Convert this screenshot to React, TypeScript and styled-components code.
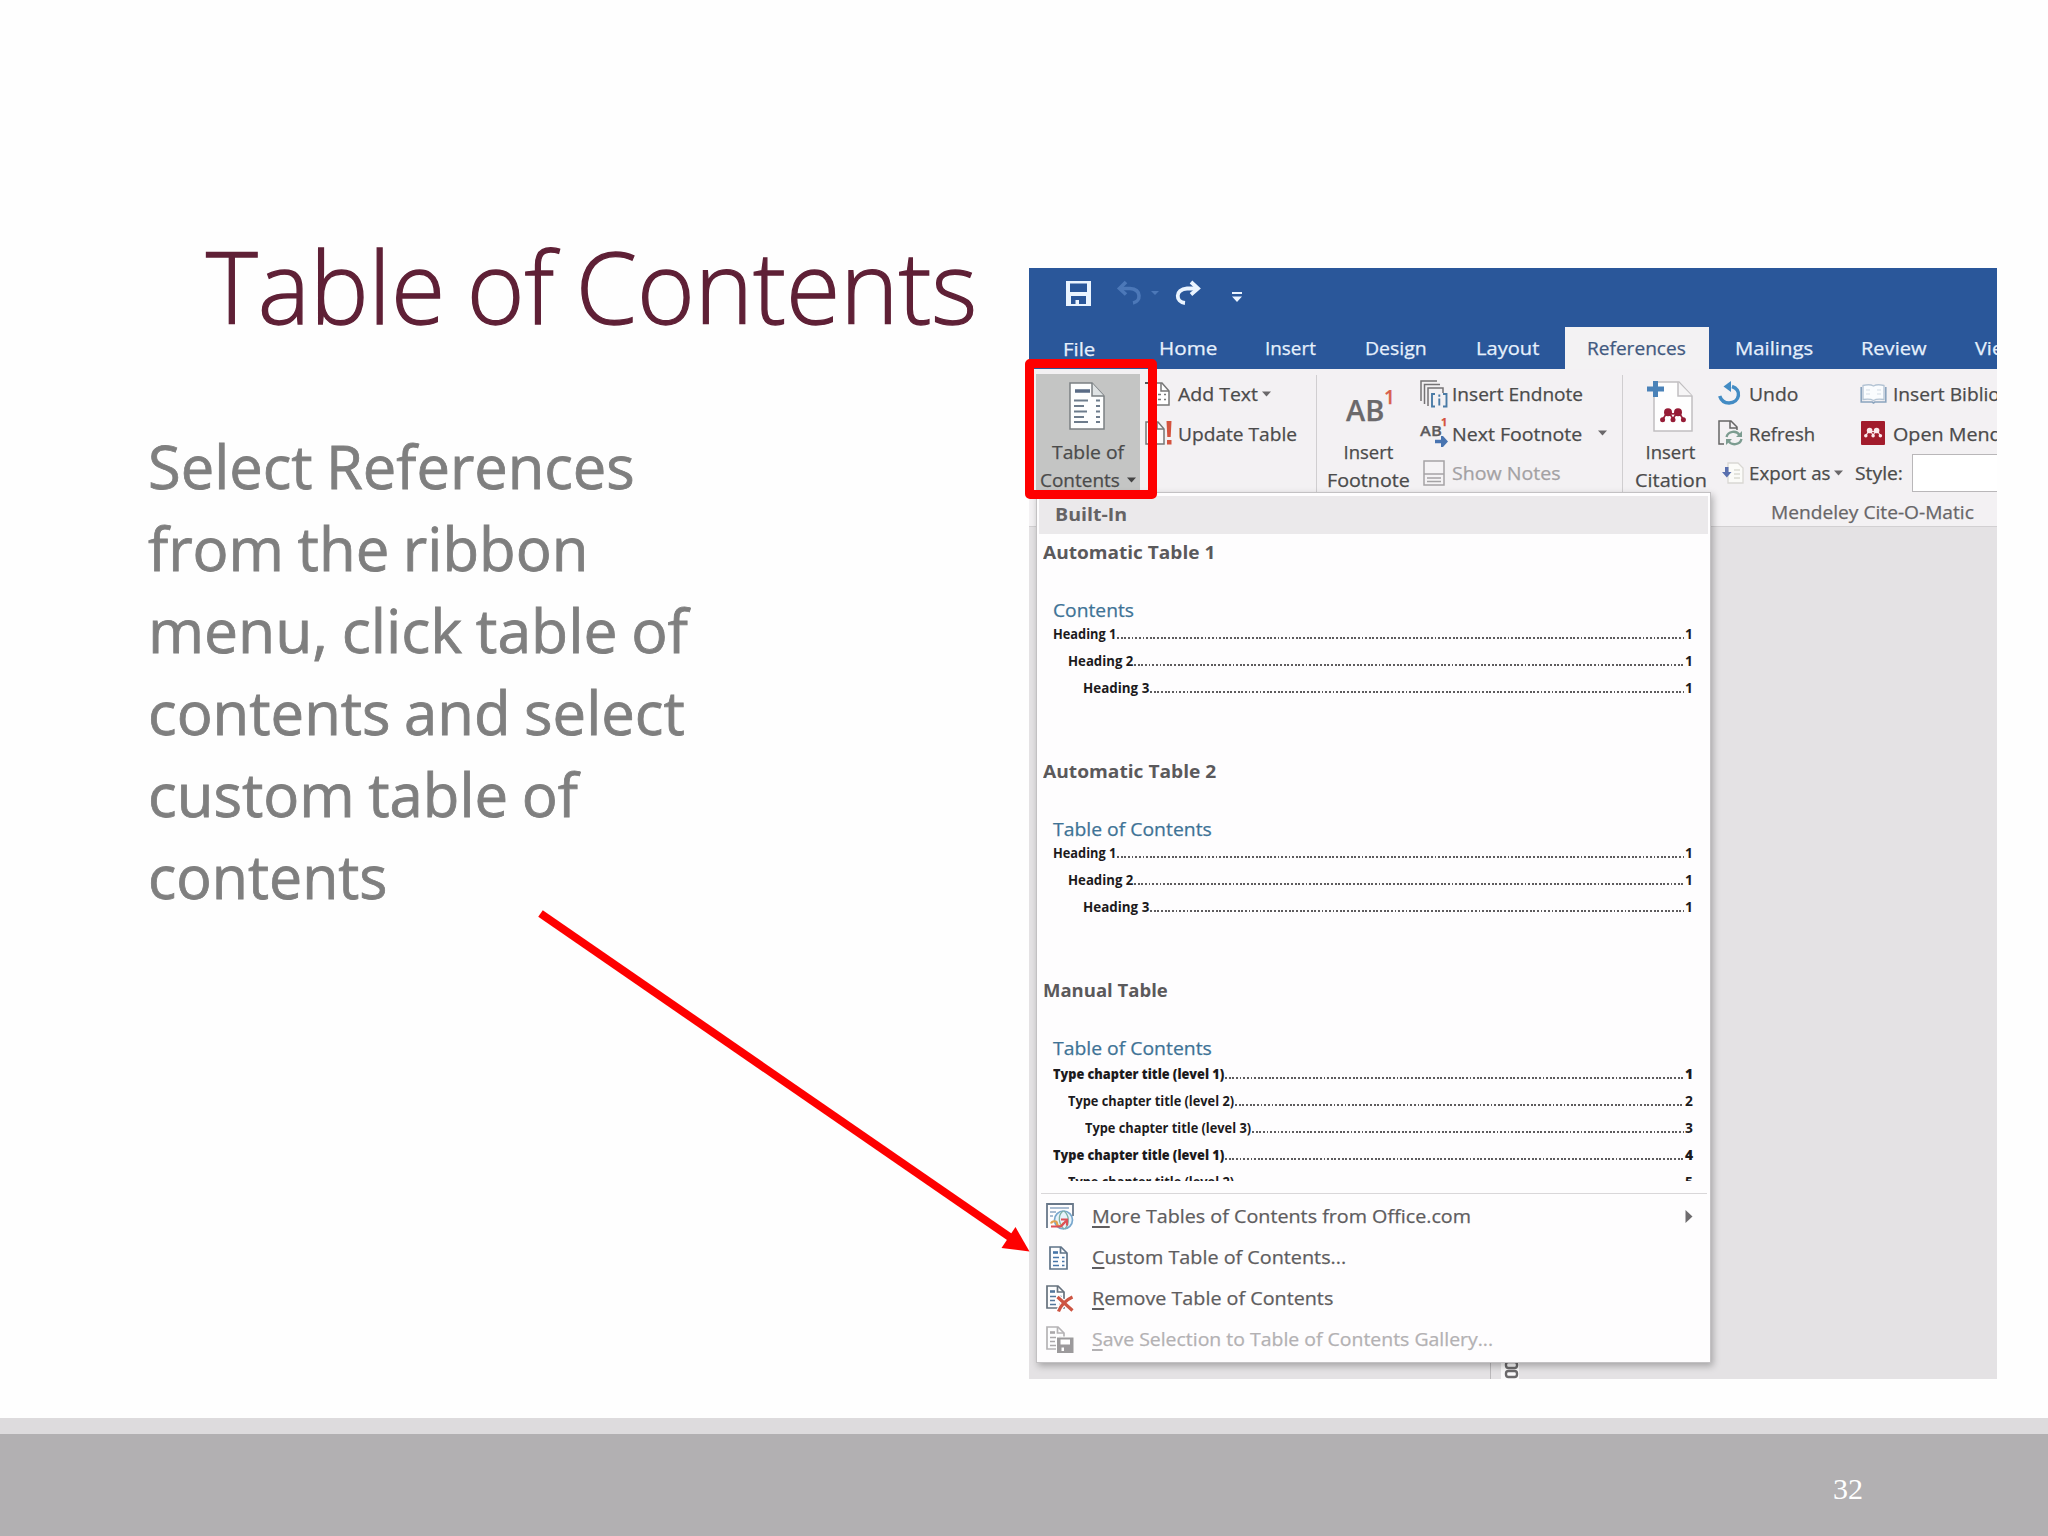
import React, { useLayoutEffect, useRef, useState } from "react";
import styled, { createGlobalStyle, css } from "styled-components";

const UI = `"Open Sans", "Noto Sans", sans-serif`;

const Global = createGlobalStyle`
  *, *::before, *::after { box-sizing: border-box; }
  html, body { margin: 0; padding: 0; background: #fefefe; }
  svg { display: block; flex: none; overflow: visible; }
`;

/* ---------- text that is condensed or widened to a set measure ---------- */

const Measure = styled.span<{ $w: number }>`
  display: block;
  flex: none;
  width: ${(p) => p.$w}px;
  white-space: nowrap;
`;
const Ink = styled.span`
  display: inline-block;
  transform-origin: 0 50%;
  white-space: nowrap;
`;

function Fit({ w, children }: { w: number; children: React.ReactNode }) {
  const ref = useRef<HTMLSpanElement>(null);
  const [scale, setScale] = useState(1);
  useLayoutEffect(() => {
    const natural = ref.current?.offsetWidth ?? 0;
    if (natural > 0) setScale(w / natural);
  }, [w]);
  return (
    <Measure $w={w}>
      <Ink ref={ref} style={{ transform: `scaleX(${scale})` }}>
        {children}
      </Ink>
    </Measure>
  );
}

/* ---------- slide ---------- */

const Slide = styled.main`
  position: relative;
  width: 2048px;
  height: 1536px;
  overflow: hidden;
  display: flex;
  flex-direction: column;
  background: #fefefe;
`;
const Body = styled.section`
  display: flex;
  height: 1418px;
`;
const Copy = styled.div`
  width: 1029px;
  flex: none;
  padding: 225px 0 0 148px;
`;
const Title = styled.h1`
  margin: 0 0 80px;
  padding-left: 58px;
  font: 300 100px/120px ${UI};
  word-spacing: -4px;
  color: #5f2036;
  -webkit-text-stroke: 1.3px #5f2036;
`;
const Para = styled.p`
  margin: 0;
  font: 400 60px/82px ${UI};
  word-spacing: -2px;
  color: #7f7f7f;
  -webkit-text-stroke: 0.8px #7f7f7f;
`;
const Stripe = styled.div`
  height: 16px;
  background: #dddbdd;
`;
const Footer = styled.footer`
  flex: 1;
  padding: 38px 0 0 1833px;
  background: #b2b0b2;
  color: #fff;
  font: 30px/34px "Liberation Serif", serif;
`;
const Pointer = styled.svg`
  position: absolute;
  left: 530px;
  top: 900px;
`;

/* ---------- word window ---------- */

const Window = styled.div`
  position: relative;
  margin-top: 268px;
  width: 968px;
  height: 1111px;
  overflow: hidden;
  display: flex;
  flex-direction: column;
  background: #e4e2e4;
  font-family: ${UI};
  -webkit-text-stroke: 0.25px currentColor;
`;
const TitleBar = styled.div`
  height: 59px;
  flex: none;
  display: flex;
  align-items: flex-start;
  padding: 13px 0 0 37px;
  background: #2a579a;
`;
const Gap = styled.span<{ $w: number }>`
  flex: none;
  width: ${(p) => p.$w}px;
`;
const Tabs = styled.nav`
  height: 42px;
  flex: none;
  display: flex;
  background: #2a579a;
`;
const Tab = styled.span<{ $lead: number; $box: number; $on?: boolean; $drop?: number }>`
  flex: none;
  width: ${(p) => p.$box}px;
  padding: ${(p) => p.$drop ?? 0}px 0 0 ${(p) => p.$lead}px;
  font-size: 18.5px;
  line-height: 42px;
  color: ${(p) => (p.$on ? "#41597f" : "#e6f0fc")};
  background: ${(p) => (p.$on ? "#f3f2f3" : "transparent")};
`;
const Ribbon = styled.div`
  height: 158px;
  flex: none;
  display: flex;
  padding-left: 7px;
  background: #f3f1f3;
  border-bottom: 1px solid #d2d0d2;
  color: #4b4b4b;
  font-size: 18.5px;
`;
const Big = styled.div<{ $w: number; $on?: boolean }>`
  flex: none;
  width: ${(p) => p.$w}px;
  height: 118px;
  margin-top: 5px;
  padding-top: 6px;
  display: flex;
  flex-direction: column;
  align-items: center;
  line-height: 28px;
  ${(p) => p.$on && css`background: #c4c5c4;`}
`;
const Art = styled.div<{ $left?: number; $right?: number; $drop?: number }>`
  height: 58px;
  flex: none;
  padding-left: ${(p) => p.$left ?? 0}px;
  padding-right: ${(p) => p.$right ?? 0}px;
  padding-top: ${(p) => p.$drop ?? 2}px;
`;
const Line = styled.div`
  display: flex;
  align-items: center;
  gap: 7px;
`;
const Column = styled.div<{ $w: number }>`
  flex: none;
  width: ${(p) => p.$w}px;
  padding-top: 5px;
`;
const Row = styled.div<{ $off?: boolean }>`
  height: 39.5px;
  display: flex;
  align-items: center;
  line-height: 39.5px;
  white-space: nowrap;
  color: ${(p) => (p.$off ? "#a3a1a3" : "#4b4b4b")};
`;
const Slot = styled.span<{ $w: number; $lead?: number }>`
  flex: none;
  width: ${(p) => p.$w}px;
  padding-left: ${(p) => p.$lead ?? 0}px;
`;
const Rule = styled.i`
  flex: none;
  width: 1px;
  height: 118px;
  margin-top: 6px;
  background: #d0ced0;
`;
const StyleBox = styled.span`
  flex: none;
  width: 100px;
  height: 38px;
  margin-left: 9px;
  background: #fff;
  border: 1px solid #b9b7b9;
`;
const GroupName = styled.div`
  padding: 2px 0 0 53px;
  line-height: 32px;
  color: #686668;
`;
const Cluster = styled.div`
  flex: none;
`;
const ClusterRow = styled.div`
  display: flex;
  height: 124.5px;
`;

/* ---------- drop-down gallery ---------- */

const Menu = styled.div`
  position: absolute;
  left: 7px;
  top: 224px;
  width: 675px;
  height: 871px;
  display: flex;
  flex-direction: column;
  background: #fefdfe;
  border: 1px solid #c3c1c3;
  box-shadow: 2px 3px 7px rgba(0, 0, 0, 0.28);
`;
const MenuHead = styled.div`
  flex: none;
  height: 38px;
  margin: 3px 2px 0 2px;
  padding-left: 16px;
  background: #ebe9eb;
  color: #656365;
  font: 700 18.5px/35px ${UI};
  -webkit-text-stroke: 0;
`;
const Gallery = styled.div`
  height: 647px;
  flex: none;
  overflow: hidden;
`;
const Entry = styled.section`
  height: 219.2px;
  padding: 3px 17px 0 6px;
`;
const EntryName = styled.div`
  font: 700 18.5px/30px ${UI};
  color: #5b595b;
  -webkit-text-stroke: 0;
`;
const EntryTitle = styled.div`
  margin: 28px 0 0 10px;
  font: 400 19px/30px ${UI};
  color: #3f7396;
`;
const Toc = styled.div<{ $pull: number }>`
  margin-top: ${(p) => -p.$pull}px;
  padding: 0 0 0 10px;
  -webkit-text-stroke: 0;
`;
const TocRow = styled.div<{ $in: number; $strong?: boolean }>`
  height: 27.1px;
  display: flex;
  padding-left: ${(p) => p.$in}px;
  font: ${(p) => (p.$strong ? 800 : 700)} 13.8px/27px ${UI};
  color: #1c1a1c;
`;
const Dots = styled.i`
  flex: 1;
  height: 2px;
  margin: 17px 1px 0 1px;
  background: repeating-linear-gradient(90deg, #5e5c5e 0 1.9px, transparent 1.9px 3.65px);
`;
const Actions = styled.div`
  flex: none;
  margin: 12px 3px 0 4px;
  padding-top: 2px;
  border-top: 1px solid #d9d7d9;
`;
const Action = styled.div<{ $off?: boolean }>`
  height: 41.1px;
  display: flex;
  align-items: center;
  font-size: 19px;
  line-height: 41px;
  color: ${(p) => (p.$off ? "#b3b1b3" : "#5f5d5f")};
`;
const Key = styled.span`
  text-decoration: underline;
  text-decoration-thickness: 1.5px;
  text-underline-offset: 3px;
`;
const Frame = styled.div`
  position: absolute;
  left: 1025px;
  top: 358.5px;
  width: 132px;
  height: 140px;
  border: 9px solid #fe0000;
  border-radius: 5px;
`;
const RulerMark = styled.svg`
  position: absolute;
  left: 462px;
  top: 1095px;
`;

/* ---------- drawings ---------- */

const Caret = ({ color = "#6a686a" }: { color?: string }) => (
  <svg width="9" height="6" viewBox="0 0 9 6"><path d="M0 .5h9L4.500 5.500z" fill={color} /></svg>
);
const SaveIcon = () => (
  <svg width="25" height="25" viewBox="0 0 25 25">
    <path fillRule="evenodd" fill="#eaf4ff" d="M0 0h25v25H0zM4 2.500v8.500h17V2.500zM5 15v8h4.500v-4H13v4h7v-8z" />
  </svg>
);
const TurnBack = () => (
  <svg width="25" height="24" viewBox="0 0 25 24">
    <g fill="none" stroke="#4c78b8" strokeWidth="3.600"><path d="M9 1 2.500 7.500 9 13.500" /><path d="M3 7.500h10c12 1 11 13 3 14.500" /></g>
  </svg>
);
const TurnForward = () => (
  <svg width="26" height="24" viewBox="0 0 26 24">
    <g fill="none" stroke="#eaf4ff" strokeWidth="3.800"><path d="m16 1 7 6.500-7 6" /><path d="M22 7.500H12C-.5 8.500.5 21 10 22" /></g>
  </svg>
);
const MoreIcon = () => (
  <svg width="10" height="22" viewBox="0 0 10 22"><path d="M0 11h10v2H0zM0 15.500h10l-5 5.500z" fill="#eaf4ff" /></svg>
);
const BigDoc = () => (
  <svg width="36" height="48" viewBox="0 0 36 48">
    <path d="M1 1h22l12 13v33H1z" fill="#fdfefe" stroke="#7b8083" strokeWidth="1.500" />
    <path d="M23 1v13h12" fill="#dfe3e4" stroke="#7b8083" strokeWidth="1.500" />
    <path d="M6 9h15" stroke="#596b85" strokeWidth="3.500" />
    <path d="M5 18.500h14M5 24h10M5 29.500h13M5 35h10M5 40h14" stroke="#6d7c8c" strokeWidth="1.800" />
    <path d="M27 18.500h4M27 24h4M27 29.500h4M27 35h4M27 40h4" stroke="#6d7c8c" strokeWidth="1.800" />
  </svg>
);
const AddTextIcon = () => (
  <svg width="25" height="26" viewBox="0 0 25 26">
    <path d="M0 2h6" stroke="#555" strokeWidth="2" />
    <path d="M5 2h12l7 8v14H5z" fill="#fff" stroke="#777" strokeWidth="1.500" />
    <path d="M16 2v8h8M13 13.500h3m3 0h2M13 18.500h3m3 0h2" fill="none" stroke="#777" strokeWidth="1.500" />
  </svg>
);
const UpdateIcon = () => (
  <svg width="28" height="26" viewBox="0 0 28 26">
    <path d="M1 2h12l6 7v15H1z" fill="#fbfafb" stroke="#777" strokeWidth="1.500" />
    <path d="M12 2v7h7" fill="none" stroke="#777" strokeWidth="1.500" />
    <path d="M21.500 1h5l-.8 16h-3.400zM22 20h4.500v4.500H22z" fill="#d4533f" />
  </svg>
);
const AbMark = styled.span`
  display: flex;
  align-items: flex-start;
  height: 45px;
  font: 600 29px/43px ${UI};
  color: #6b696b;
`;
const AbSup = styled.span`
  margin-left: 0;
  font: 600 19px/18px ${UI};
  color: #d8604b;
`;
const EndnoteIcon = () => (
  <svg width="28" height="28" viewBox="0 0 28 28">
    <g fill="none" stroke="#757375" strokeWidth="1.500">
      <path d="M1 21V1h16M4.500 24V4.500H20M8 26V8h15v5" />
    </g>
    <g fill="none" stroke="#4a7ba6" strokeWidth="1.900"><path d="M15 14h-3v12.500h3M23 14h3.500v12.500H23M19.300 18.500v7M19.300 14.500v2.200" /></g>
  </svg>
);
const NextBox = styled.span`
  position: relative;
  display: block;
  height: 28px;
  font: 600 15px/22px ${UI};
  color: #5d5b5d;
`;
const NextSup = styled.span`
  position: absolute;
  left: 21px;
  top: -4px;
  font: 700 11px/14px ${UI};
  color: #d4533f;
`;
const NextArrow = styled.svg`
  position: absolute;
  left: 15px;
  top: 17px;
`;
const NotesIcon = () => (
  <svg width="22" height="26" viewBox="0 0 22 26">
    <path d="M1 1h20v24H1zM1 14h20" fill="#f5f3f5" stroke="#a5a3a5" strokeWidth="1.500" />
    <path d="M4 18h14M4 21.500h14" stroke="#a5a3a5" strokeWidth="1.400" />
  </svg>
);
const Mendeley = ({ fill }: { fill: string }) => (
  <g fill={fill}>
    <circle cx="8" cy="4.300" r="4" /><circle cx="18" cy="4.300" r="4" />
    <circle cx="2.600" cy="11.800" r="2.500" /><circle cx="13" cy="11.800" r="2.500" /><circle cx="23.400" cy="11.800" r="2.500" />
    <path d="M3 11 7 4.500l6 1.500 6-1.500 4 6.500M10 6l3 5 3-5" fill="none" stroke={fill} strokeWidth="1.600" />
  </g>
);
const CitationIcon = () => (
  <svg width="46" height="53" viewBox="0 0 46 53">
    <path d="M7 2h25l13 14v35H7z" fill="#fefefe" stroke="#c1bfc1" strokeWidth="1.500" />
    <path d="M31 2v14h14" fill="#f6f5f6" stroke="#c1bfc1" strokeWidth="1.500" />
    <path d="M6 1h5v5.500h6v5h-6V17H6v-5.500H0v-5h6z" fill="#4a82b8" />
    <g transform="translate(13 28)"><Mendeley fill="#951c36" /></g>
  </svg>
);
const UndoIcon = () => (
  <svg width="23" height="25" viewBox="0 0 23 25">
    <path d="M14 5.500c10 3 8 16-3 16.500-5 0-8-3-9.300-7" fill="none" stroke="#438cc4" strokeWidth="3.500" />
    <path d="M13 0v11L5.500 5.500z" fill="#438cc4" />
  </svg>
);
const RefreshIcon = () => (
  <svg width="25" height="27" viewBox="0 0 25 27">
    <path d="M6 24H1V1h12l6 6v3M12 1v7h7" fill="none" stroke="#666" strokeWidth="1.500" />
    <g fill="none" stroke="#7c9c90" strokeWidth="2.400"><path d="M8.500 17c1.500-6 10-7 13-2M23.500 19c-1.500 6-10 7-13 2" /></g>
    <path d="M24 11v6h-6zM8 25v-6h6z" fill="#7c9c90" />
  </svg>
);
const ExportIcon = () => (
  <svg width="22" height="22" viewBox="0 0 22 22">
    <path d="M6 1h10l5 5v15H6z" fill="#fbfbf8" stroke="#d9d7d3" strokeWidth="1.300" />
    <path d="M12 8h6M12 12h6M12 16h6" stroke="#dcdcd2" strokeWidth="1.300" />
    <path d="M3 5h3.500v5H9.500l-4.700 5.500L0 10h3z" fill="#596fae" />
  </svg>
);
const BookIcon = () => (
  <svg width="27" height="20" viewBox="0 0 27 20">
    <path d="M3 1.500c4-1 8-1 10.500.5C16 .5 20 .5 24 1.500v14c-4-.6-8-.6-10.500 1-2.500-1.600-6.500-1.600-10.500-1z" fill="#fafcfe" stroke="#b4c4d4" strokeWidth="1.300" />
    <path d="M1.200 3v15h11l1.300 1 1.300-1h11V3" fill="none" stroke="#8ba4be" strokeWidth="1.600" />
    <path d="M6 6h4M6 10h4M17 6h4M17 10h4" stroke="#d3dce5" />
  </svg>
);
const OpenIcon = () => (
  <svg width="24" height="24" viewBox="0 0 24 24">
    <rect width="24" height="24" rx="1" fill="#a21c2c" />
    <g transform="translate(3 6.500) scale(.7)"><Mendeley fill="#fbe9eb" /></g>
  </svg>
);
const SmallDocShape = ({ c, a }: { c: string; a: string }) => (
  <>
    <path d="M1 1h11l6 6v16H1z" fill="#fdfdfe" stroke={c} strokeWidth="1.700" />
    <path d="M11.500 1v6H18" fill="none" stroke={c} strokeWidth="1.700" />
    <path d="M4 6.500h5" stroke={a} strokeWidth="2.600" />
    <path d="M4 11.500h6M4 15.500h5M4 19.500h6M13 11.500h2.500M13 15.500h2.500M13 19.500h2.500" stroke={a} strokeWidth="1.500" />
  </>
);
const OfficeIcon = () => (
  <svg width="28" height="27" viewBox="0 0 28 27">
    <path d="M1 25V1h26v12" fill="none" stroke="#69788a" strokeWidth="1.800" />
    <path d="M4 5h19M4 9h6M4 13h3" stroke="#a9bcd2" strokeWidth="1.800" />
    <circle cx="17.500" cy="17" r="9" fill="#e8f3fb" stroke="#78a7cd" strokeWidth="1.700" />
    <path d="M17 8c-6 5-4 13 1 18M18 8c5 4 6 12 1 18" fill="none" stroke="#7fb0a5" strokeWidth="1.300" />
    <path d="M5 20.500c1-3 6-3 6 0s4 4 7-1" fill="none" stroke="#e2a14f" strokeWidth="2.200" />
    <path d="M5 23.500h10l5-5.500M15 16.500h6v6" fill="none" stroke="#dc5057" strokeWidth="2.200" />
  </svg>
);
const CustomIcon = () => (
  <svg width="19" height="24" viewBox="0 0 19 24"><SmallDocShape c="#5f7388" a="#4876a8" /></svg>
);
const RemoveIcon = () => (
  <svg width="28" height="27" viewBox="0 0 28 27">
    <SmallDocShape c="#66717d" a="#53779c" />
    <path d="m11.500 12 15 13.500M26.500 12C20 15 15 20 12.500 26.500" fill="none" stroke="#fff" strokeWidth="5.500" />
    <path d="m11.500 12 15 13.500M26.500 12C20 15 15 20 12.500 26.500" fill="none" stroke="#cd5543" strokeWidth="3.200" />
  </svg>
);
const SaveGalleryIcon = () => (
  <svg width="28" height="27" viewBox="0 0 28 27">
    <SmallDocShape c="#b5b3b5" a="#aaa8aa" />
    <path d="M10 10.500h18V27H10z" fill="#fff" />
    <path fillRule="evenodd" d="M11 11.500h16.500V27H11zM14.500 13.500v5H24v-5zM15.500 21.500V25h2.500v-3.500z" fill="#9c9a9c" />
  </svg>
);

/* ---------- data ---------- */

type TocLine = { text: string; w: number; indent: number; page: string; strong?: boolean };
const headings: TocLine[] = [
  { text: "Heading 1", w: 63, indent: 0, page: "1" },
  { text: "Heading 2", w: 65, indent: 15, page: "1" },
  { text: "Heading 3", w: 66, indent: 30, page: "1" },
];
const chapters: TocLine[] = [
  { text: "Type chapter title (level 1)", w: 171, indent: 0, page: "1", strong: true },
  { text: "Type chapter title (level 2)", w: 166, indent: 15, page: "2" },
  { text: "Type chapter title (level 3)", w: 166, indent: 32, page: "3" },
  { text: "Type chapter title (level 1)", w: 171, indent: 0, page: "4", strong: true },
  { text: "Type chapter title (level 2)", w: 166, indent: 15, page: "5" },
];
const gallery = [
  { name: "Automatic Table 1", nameW: 172, title: "Contents", titleW: 81, lines: headings, pull: 5 },
  { name: "Automatic Table 2", nameW: 173, title: "Table of Contents", titleW: 159, lines: headings, pull: 5 },
  { name: "Manual Table", nameW: 125, title: "Table of Contents", titleW: 159, lines: chapters, pull: 3.5 },
];
const tabs = [
  { label: "File", w: 32, lead: 34, box: 100, drop: 1 },
  { label: "Home", w: 58, lead: 30, box: 110 },
  { label: "Insert", w: 51, lead: 26, box: 98 },
  { label: "Design", w: 62, lead: 28, box: 111 },
  { label: "Layout", w: 63, lead: 28, box: 117 },
  { label: "References", w: 99, lead: 22, box: 144, on: true },
  { label: "Mailings", w: 78, lead: 26, box: 125 },
  { label: "Review", w: 65, lead: 27, box: 115 },
  { label: "View", w: 43, lead: 26, box: 90 },
];
const actions = [
  { icon: <OfficeIcon />, lead: 5, first: "M", rest: "ore Tables of Contents from Office.com", w: 379, sub: true },
  { icon: <CustomIcon />, lead: 8, first: "C", rest: "ustom Table of Contents...", w: 254 },
  { icon: <RemoveIcon />, lead: 5, first: "R", rest: "emove Table of Contents", w: 241 },
  { icon: <SaveGalleryIcon />, lead: 5, first: "S", rest: "ave Selection to Table of Contents Gallery...", w: 401, off: true },
];
const copy: [string, number][] = [
  ["Select References", 487],
  ["from the ribbon", 440],
  ["menu, click table of", 540],
  ["contents and select", 537],
  ["custom table of", 430],
  ["contents", 240],
];

export default function App() {
  return (
    <>
      <Global />
      <Slide>
        <Body>
          <Copy>
            <Title><Fit w={771}>Table of Contents</Fit></Title>
            <Para>
              {copy.map(([t, w]) => <Fit key={t} w={w}>{t}</Fit>)}
            </Para>
          </Copy>
          <Window>
            <TitleBar>
              <SaveIcon /><Gap $w={26} /><TurnBack /><Gap $w={9} />
              <svg width="8" height="24" viewBox="0 0 8 24"><path d="M0 10h8l-4 4z" fill="#4c78b8" /></svg>
              <Gap $w={16} /><TurnForward /><Gap $w={31} />
              <MoreIcon />
            </TitleBar>
            <Tabs>
              {tabs.map((t) => (
                <Tab key={t.label} $lead={t.lead} $box={t.box} $on={t.on} $drop={t.drop}>
                  <Fit w={t.w}>{t.label}</Fit>
                </Tab>
              ))}
            </Tabs>
            <Ribbon>
              <Big $w={104} $on>
                <Art $right={3}><BigDoc /></Art>
                <Fit w={72}>Table of</Fit>
                <Line><Fit w={80}>Contents</Fit><Caret color="#444" /></Line>
              </Big>
              <Column $w={176}>
                <Row>
                  <Slot $w={38} $lead={5}><AddTextIcon /></Slot>
                  <Fit w={80}>Add Text</Fit><Gap $w={4} /><Caret />
                </Row>
                <Row>
                  <Slot $w={38} $lead={5}><UpdateIcon /></Slot>
                  <Fit w={119}>Update Table</Fit>
                </Row>
              </Column>
              <Rule />
              <Big $w={103}>
                <Art $left={4} $drop={8}>
                  <AbMark><Fit w={38}>AB</Fit><AbSup>1</AbSup></AbMark>
                </Art>
                <Fit w={50}>Insert</Fit>
                <Fit w={83}>Footnote</Fit>
              </Big>
              <Column $w={202}>
                <Row>
                  <Slot $w={32}><EndnoteIcon /></Slot>
                  <Fit w={131}>Insert Endnote</Fit>
                </Row>
                <Row>
                  <Slot $w={32}>
                    <NextBox>
                      <Fit w={22}>AB</Fit>
                      <NextSup>1</NextSup>
                      <NextArrow width="13" height="11" viewBox="0 0 13 11">
                        <path d="M0 3.700h6V0h2l5 5.500L8 11H6V7.300H0z" fill="#4874b0" />
                      </NextArrow>
                    </NextBox>
                  </Slot>
                  <Fit w={130}>Next Footnote</Fit><Gap $w={16} /><Caret />
                </Row>
                <Row $off>
                  <Slot $w={32} $lead={3}><NotesIcon /></Slot>
                  <Fit w={109}>Show Notes</Fit>
                </Row>
              </Column>
              <Rule />
              <Cluster>
                <ClusterRow>
                  <Big $w={95}>
                    <Art $right={2} $drop={0}><CitationIcon /></Art>
                    <Fit w={50}>Insert</Fit>
                    <Fit w={72}>Citation</Fit>
                  </Big>
                  <Column $w={136}>
                    <Row><Slot $w={31}><UndoIcon /></Slot><Fit w={49}>Undo</Fit></Row>
                    <Row><Slot $w={31}><RefreshIcon /></Slot><Fit w={66}>Refresh</Fit></Row>
                    <Row><Slot $w={31} $lead={4}><ExportIcon /></Slot><Fit w={81}>Export as</Fit><Gap $w={4} /><Caret /></Row>
                  </Column>
                  <Column $w={170}>
                    <Row><Slot $w={39} $lead={6}><BookIcon /></Slot><Fit w={169}>Insert Bibliography</Fit></Row>
                    <Row><Slot $w={39} $lead={7}><OpenIcon /></Slot><Fit w={146}>Open Mendeley</Fit></Row>
                    <Row><Gap $w={1} /><Fit w={48}>Style:</Fit><StyleBox /></Row>
                  </Column>
                </ClusterRow>
                <GroupName>
                  <Line><Gap $w={88} /><Fit w={203}>Mendeley Cite-O-Matic</Fit></Line>
                </GroupName>
              </Cluster>
            </Ribbon>

            <RulerMark width="60" height="16" viewBox="0 0 60 16">
              <path d="M-.5 0v16" stroke="#bab8ba" />
              <path d="M10 0h18v16H10z" fill="#fbfafb" />
              <g fill="none" stroke="#6c6a6c" strokeWidth="2.400"><rect x="15" y="-1" width="11" height="6" rx="2.500" /><rect x="15" y="8" width="11" height="6" rx="2.500" /></g>
            </RulerMark>

            <Menu>
              <MenuHead><Fit w={72}>Built-In</Fit></MenuHead>
              <Gallery>
                {gallery.map((g) => (
                  <Entry key={g.name}>
                    <EntryName><Fit w={g.nameW}>{g.name}</Fit></EntryName>
                    <EntryTitle><Fit w={g.titleW}>{g.title}</Fit></EntryTitle>
                    <Toc $pull={g.pull}>
                      {g.lines.map((l, i) => (
                        <TocRow key={i} $in={l.indent} $strong={l.strong}>
                          <Fit w={l.w}>{l.text}</Fit>
                          <Dots />
                          <Fit w={8}>{l.page}</Fit>
                        </TocRow>
                      ))}
                    </Toc>
                  </Entry>
                ))}
              </Gallery>
              <Actions>
                {actions.map((a) => (
                  <Action key={a.first} $off={a.off}>
                    <Slot $w={51} $lead={a.lead}>{a.icon}</Slot>
                    <Fit w={a.w}><Key>{a.first}</Key>{a.rest}</Fit>
                    {a.sub && (
                      <>
                        <Gap $w={214} />
                        <svg width="8" height="13" viewBox="0 0 8 13"><path d="M.5 0 7.500 6.500.5 13z" fill="#6e6c6e" /></svg>
                      </>
                    )}
                  </Action>
                ))}
              </Actions>
            </Menu>
          </Window>
        </Body>
        <Stripe />
        <Footer>32</Footer>
        <Frame />
        <Pointer width="510" height="360" viewBox="530 900 510 360">
          <path d="M540.500 913.500 1014 1240" stroke="#fe0000" strokeWidth="8" />
          <path d="M1029.500 1251.500 1015.500 1227 1001.500 1248z" fill="#fe0000" />
        </Pointer>
      </Slide>
    </>
  );
}
